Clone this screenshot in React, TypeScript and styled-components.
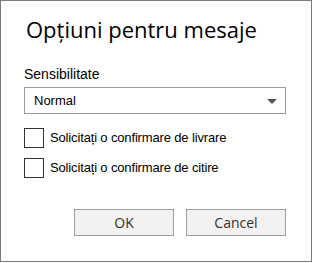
import React from "react";
import styled, { createGlobalStyle } from "styled-components";

const Global = createGlobalStyle`
  html, body { margin: 0; padding: 0; background: #ffffff; }
  * { box-sizing: border-box; }
`;

const FONT = `"Segoe UI", "Open Sans", "Noto Sans", sans-serif`;
const BODY = `"Liberation Sans", Arial, sans-serif`;

const Dialog = styled.div`
  width: 312px;
  height: 262px;
  border: 1px solid #7a7a7a;
  background: #ffffff;
  padding: 0 25px 0 23px;
  display: flex;
  flex-direction: column;
  font-family: ${FONT};
  color: #000000;
`;

const Title = styled.h1`
  margin: 14px 0 0 2px;
  font-size: 22px;
  line-height: 28px;
  font-weight: 400;
  letter-spacing: 0;
`;

const Label = styled.div`
  margin-top: 22px;
  font-family: ${BODY};
  font-size: 14px;
  line-height: 18px;
`;

const Select = styled.div`
  margin-top: 4px;
  height: 27px;
  border: 1px solid #9a9a9a;
  display: flex;
  align-items: center;
  justify-content: space-between;
  padding: 0 8px 0 9px;
  font-family: ${BODY};
  font-size: 13px;
`;

const Arrow = styled.span`
  width: 0;
  height: 0;
  border-left: 5px solid transparent;
  border-right: 5px solid transparent;
  border-top: 5px solid #555555;
  margin-top: 1px;
`;

const Checks = styled.div`
  margin-top: 14px;
  display: flex;
  flex-direction: column;
  gap: 10px;
`;

const CheckRow = styled.label`
  display: flex;
  align-items: center;
  gap: 6px;
  font-family: ${BODY};
  font-size: 13px;
  letter-spacing: -0.15px;
  line-height: 20px;
`;

const Box = styled.span`
  width: 20px;
  height: 20px;
  border: 1px solid #333333;
  flex: none;
`;

const Buttons = styled.div`
  margin-top: 31px;
  display: flex;
  justify-content: flex-end;
  gap: 12px;
`;

const Button = styled.button`
  width: 100px;
  height: 27px;
  background: #f3f2f1;
  border: 1px solid #a19f9d;
  font-family: ${FONT};
  font-size: 14px;
  color: #323130;
  padding: 0;
`;

export default function App() {
  return (
    <>
      <Global />
      <Dialog>
        <Title>Opțiuni pentru mesaje</Title>
        <Label>Sensibilitate</Label>
        <Select>
          <span>Normal</span>
          <Arrow />
        </Select>
        <Checks>
          <CheckRow>
            <Box />
            Solicitați o confirmare de livrare
          </CheckRow>
          <CheckRow>
            <Box />
            Solicitați o confirmare de citire
          </CheckRow>
        </Checks>
        <Buttons>
          <Button>OK</Button>
          <Button>Cancel</Button>
        </Buttons>
      </Dialog>
    </>
  );
}
